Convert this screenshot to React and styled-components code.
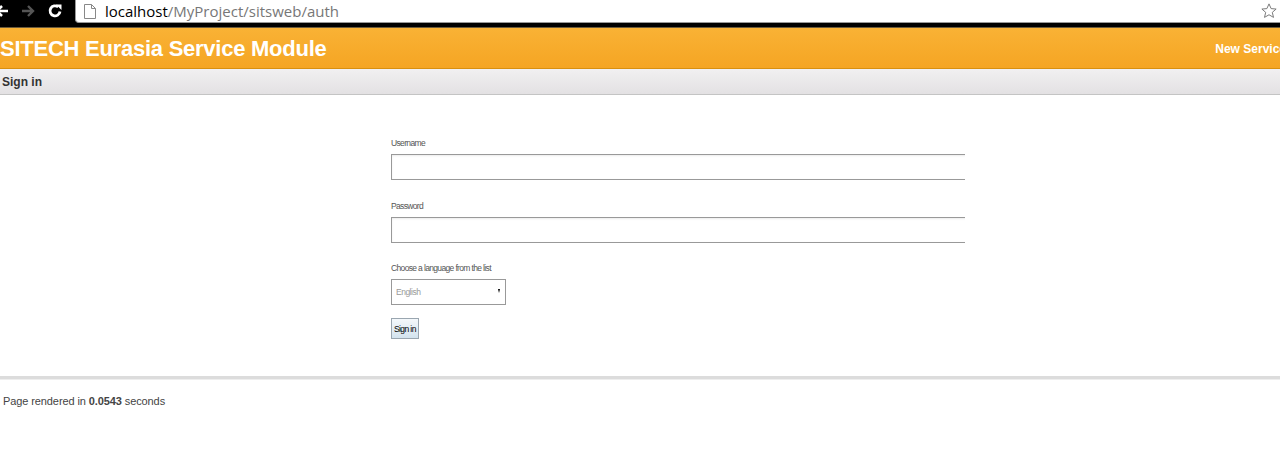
import React from 'react';
import styled, {createGlobalStyle} from 'styled-components';

const GlobalStyle = createGlobalStyle`
  html, body {
    margin: 0;
    padding: 0;
    background: #fff;
    font-family: "Liberation Sans", Arial, sans-serif;
  }
`;

const Page = styled.div`
  width: 1280px;
  height: 469px;
  overflow: hidden;
  display: flex;
  flex-direction: column;
`;

// browser chrome
const ChromeBar = styled.div`
  height: 27px;
  background: #000;
  display: flex;
  align-items: flex-start;
  border-bottom: 1px solid #6b5a3a;
`;

const NavButtons = styled.div`
  width: 80px;
  height: 22px;
  display: flex;
  align-items: center;
  gap: 11px;
  margin-left: -5px;
`;

const AddressBox = styled.div`
  flex: 1;
  height: 22px;
  background: #fff;
  border-left: 1px solid #999;
  border-bottom: 1px solid #999;
  border-bottom-left-radius: 4px;
  display: flex;
  align-items: center;
  padding-left: 8px;
  font-family: "Open Sans", "Noto Sans", sans-serif;
  font-size: 15px;
`;

const Host = styled.span`
  color: #000;
  margin-left: 9px;
`;

const PathPart = styled.span`
  color: #777;
  flex: 1;
`;

const StarIcon = styled.svg`
  margin-right: 2px;
`;

// site header
const Header = styled.div`
  height: 40px;
  background: linear-gradient(#f9b235, #f5a523);
  border-bottom: 1px solid #d9900f;
  display: flex;
  align-items: center;
  justify-content: space-between;
  overflow: hidden;
`;

const Title = styled.div`
  color: #fff;
  font-weight: bold;
  font-size: 22px;
  letter-spacing: -0.25px;
  margin-top: 1px;
`;

const HeaderLink = styled.div`
  color: #fff;
  font-weight: bold;
  font-size: 12px;
  white-space: nowrap;
  margin-right: -6px;
  margin-top: 2px;
`;

const SubNav = styled.div`
  height: 25px;
  background: linear-gradient(#f1f0f1, #e3e1e3);
  border-bottom: 1px solid #c4c4c4;
  display: flex;
  align-items: center;
  padding-left: 2px;
  font-size: 12px;
  font-weight: bold;
  color: #333;
`;

// form
const Main = styled.div`
  padding: 42px 0 37px 391px;
`;

const Form = styled.form`
  width: 574px;
  overflow: hidden;
  display: flex;
  flex-direction: column;
  align-items: flex-start;
`;

const Field = styled.div`
  display: flex;
  flex-direction: column;
  align-items: flex-start;
  width: 100%;
  margin-bottom: ${p => p.gap}px;
`;

const Label = styled.label`
  font-size: 8.5px;
  line-height: 12px;
  letter-spacing: -0.65px;
  color: #555;
  margin-bottom: 5px;
`;

const TextInput = styled.input`
  box-sizing: border-box;
  width: 620px;
  height: 26px;
  border: 1px solid #999;
  box-shadow: inset 0 1px 2px rgba(0, 0, 0, 0.08);
  outline: none;
  padding: 0 4px;
  margin: 0;
`;

const SelectBox = styled.div`
  box-sizing: border-box;
  width: 115px;
  height: 26px;
  border: 1px solid #999;
  display: flex;
  align-items: center;
  justify-content: space-between;
  padding: 0 5px 0 4px;
  font-size: 8.5px;
  letter-spacing: -0.5px;
  color: #999;
`;

const Caret = styled.span`
  width: 0;
  height: 0;
  border-left: 1.5px solid transparent;
  border-right: 1.5px solid transparent;
  border-top: 4px solid #000;
  margin-top: -2px;
`;

const Button = styled.button`
  box-sizing: border-box;
  height: 21px;
  padding: 0 2px;
  border: 1px solid #9aa6b0;
  background: linear-gradient(#f4f8fb, #d3e3ee);
  font-family: "Liberation Sans", Arial, sans-serif;
  font-size: 8.5px;
  letter-spacing: -0.6px;
  color: #000;
  margin: 0;
`;

const Rule = styled.div`
  height: 3px;
  background: #dcdcdc;
  border-bottom: 1px solid #eee;
`;

const Footer = styled.div`
  padding: 15px 0 0 3px;
  font-size: 11px;
  letter-spacing: -0.1px;
  color: #444;
`;

const BackIcon = () => (
  <svg width="14" height="14" viewBox="0 0 14 14">
    <path d="M7 2 L2 7 L7 12 M2 7 H13" stroke="#fff" strokeWidth="2.6" fill="none"/>
  </svg>
);

const ForwardIcon = () => (
  <svg width="16" height="14" viewBox="0 0 16 14">
    <path d="M8 2 L13 7 L8 12 M13 7 H2" stroke="#555" strokeWidth="2.4" fill="none"/>
  </svg>
);

const ReloadIcon = () => (
  <svg width="16" height="16" viewBox="0 0 16 16">
    <path d="M13 8.5 A5 5 0 1 1 11.2 4" stroke="#fff" strokeWidth="2.8" fill="none"/>
    <path d="M9 1.5 L14.5 1.5 L14.5 7 Z" fill="#fff"/>
  </svg>
);

const DocIcon = () => (
  <svg width="12" height="15" viewBox="0 0 12 15">
    <path d="M0.5 0.5 H7.5 L11.5 4.5 V14.5 H0.5 Z" fill="#fff" stroke="#888"/>
    <path d="M7.5 0.5 V4.5 H11.5" fill="none" stroke="#888"/>
  </svg>
);

export default function App() {
  return (
    <Page>
      <GlobalStyle/>
      <ChromeBar>
        <NavButtons>
          <BackIcon/>
          <ForwardIcon/>
          <ReloadIcon/>
        </NavButtons>
        <AddressBox>
          <DocIcon/>
          <Host>localhost</Host>
          <PathPart>/MyProject/sitsweb/auth</PathPart>
          <StarIcon width="18" height="18" viewBox="0 0 24 24">
            <path d="M12 2.5 L14.8 8.8 L21.5 9.4 L16.4 13.8 L18 20.5 L12 17 L6 20.5 L7.6 13.8 L2.5 9.4 L9.2 8.8 Z"
                  fill="none" stroke="#777" strokeWidth="1.3"/>
          </StarIcon>
        </AddressBox>
      </ChromeBar>
      <Header>
        <Title>SITECH Eurasia Service Module</Title>
        <HeaderLink>New Service</HeaderLink>
      </Header>
      <SubNav>Sign in</SubNav>
      <Main>
        <Form onSubmit={e => e.preventDefault()}>
          <Field gap={20}>
            <Label>Username</Label>
            <TextInput type="text"/>
          </Field>
          <Field gap={19}>
            <Label>Password</Label>
            <TextInput type="password"/>
          </Field>
          <Field gap={13}>
            <Label>Choose a language from the list</Label>
            <SelectBox>
              English
              <Caret/>
            </SelectBox>
          </Field>
          <Button type="submit">Sign in</Button>
        </Form>
      </Main>
      <Rule/>
      <Footer>Page rendered in <b>0.0543</b> seconds</Footer>
    </Page>
  );
}
